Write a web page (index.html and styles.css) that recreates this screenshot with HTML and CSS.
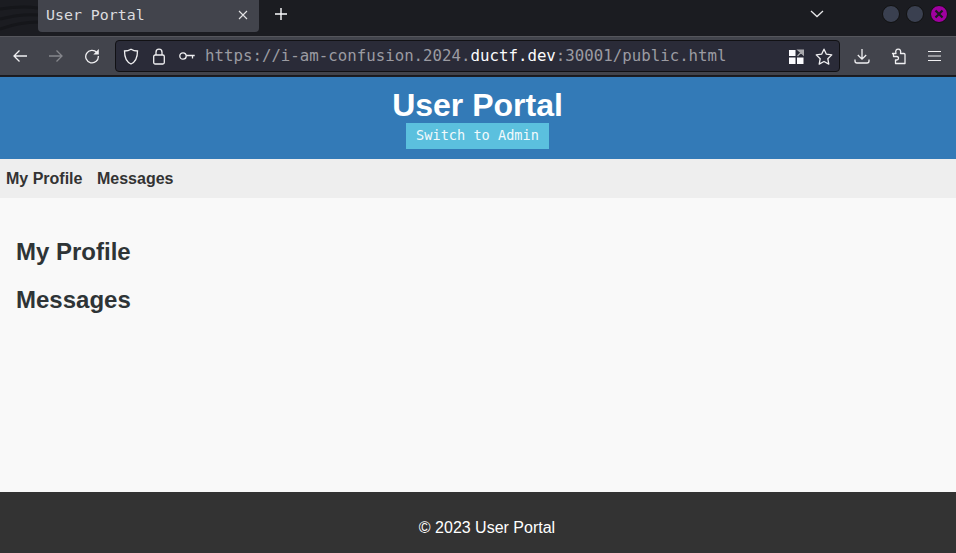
FILE: index.html
```html
<!DOCTYPE html>
<html lang="en">
<head>
<meta charset="utf-8">
<title>User Portal</title>
<link rel="stylesheet" href="styles.css">
</head>
<body>
<div class="chrome">
  <div class="tabbar">
    <svg class="streaks" width="38" height="36" viewBox="0 0 38 36"><path d="M0 9c12-2 26-3 38-1M0 19c12-3 26-5 38-4M0 29c14-5 26-7 38-7" fill="none" stroke="#15161a" stroke-width="3"/></svg>
    <div class="tab">
      <span class="tab-title">User Portal</span>
      <svg class="tab-close" width="10" height="10" viewBox="0 0 10 10"><path d="M1 1l8 8M9 1l-8 8" fill="none" stroke="#e4e4e6" stroke-width="1.1"/></svg>
    </div>
    <svg class="newtab" width="14" height="14" viewBox="0 0 14 14"><path d="M7 1v12M1 7h12" fill="none" stroke="#fbfbfe" stroke-width="1.4"/></svg>
    <svg class="tablist" width="14" height="8" viewBox="0 0 14 8"><path d="M1 1l6 5.500L13 1" fill="none" stroke="#e6e6e8" stroke-width="1.300"/></svg>
    <div class="winbtns">
      <span class="winbtn"></span>
      <span class="winbtn"></span>
      <span class="winbtn winclose"><svg width="10" height="10" viewBox="0 0 10 10"><path d="M1.500 1.500l7 7M8.500 1.500l-7 7" fill="none" stroke="#1a1a1e" stroke-width="2.200"/></svg></span>
    </div>
  </div>
  <div class="toolbar">
    <svg class="tool" width="16" height="16" viewBox="0 0 16 16"><path d="M15 8H2M7.500 2.500L2 8l5.500 5.500" fill="none" stroke="#f0f0f2" stroke-width="1.300"/></svg>
    <svg class="tool fwd" width="16" height="16" viewBox="0 0 16 16"><path d="M1 8h13M8.500 2.500L14 8l-5.500 5.500" fill="none" stroke="#85868c" stroke-width="1.300"/></svg>
    <svg class="tool reload" width="16" height="16" viewBox="0 0 16 16"><path d="M12.800 4.500A6.300 6.300 0 1 0 14.300 8" fill="none" stroke="#f0f0f2" stroke-width="1.300"/><path d="M14.800 1v5.500H9.300z" fill="#f0f0f2"/></svg>
    <div class="urlbar">
      <svg class="shield" width="16" height="17" viewBox="0 0 16 17"><path d="M8 1.200c2 1.300 4 1.800 6.500 1.800 0 6-1 10.500-6.500 13C2.500 13.500 1.500 9 1.500 3 4 3 6 2.500 8 1.200z" fill="none" stroke="#f0f0f2" stroke-width="1.300"/></svg>
      <svg class="lock" width="14" height="17" viewBox="0 0 14 17"><rect x="1.700" y="7" width="10.600" height="9" rx="1.500" fill="none" stroke="#f0f0f2" stroke-width="1.300"/><path d="M4 7V4.200a3 3 0 0 1 6 0V7" fill="none" stroke="#f0f0f2" stroke-width="1.300"/></svg>
      <svg class="key" width="16" height="10" viewBox="0 0 16 10"><circle cx="4" cy="5" r="3.200" fill="none" stroke="#f0f0f2" stroke-width="1.300"/><path d="M7.200 4.500h8.500M13.500 4.500v3" fill="none" stroke="#f0f0f2" stroke-width="1.300"/></svg>
      <div class="url"><span class="dim">https://i-am-confusion.2024.</span><span class="host">ductf.dev</span><span class="dim">:30001/public.html</span></div>
      <svg class="qr" width="15" height="15" viewBox="0 0 15 15"><path d="M0 1h6.500v6H0zM0 8.500h6.500V15H0zM8 8.500h6.500V15H8z" fill="#fbfbfe"/><path d="M9 1h5.500v5zM14 1.500L8.500 7" fill="#a8a8ac" stroke="#a8a8ac" stroke-width="1.200"/></svg>
      <svg class="star" width="18" height="17" viewBox="0 0 18 17"><path d="M9 1.200l2.400 5 5.400.7-4 3.800 1 5.400L9 13.500l-4.800 2.600 1-5.400-4-3.800 5.400-.7z" fill="none" stroke="#f0f0f2" stroke-width="1.300" stroke-linejoin="round"/></svg>
    </div>
    <svg class="tool dl" width="16" height="16" viewBox="0 0 16 16"><path d="M8 1v10M3.800 7L8 11.200 12.200 7M1 11.500v1.500a2 2 0 0 0 2 2h10a2 2 0 0 0 2-2v-1.500" fill="none" stroke="#f0f0f2" stroke-width="1.300"/></svg>
    <svg class="tool ext" width="16" height="17" viewBox="0 0 16 17"><path d="M1.500 5.500h3.500c-1-3 .5-4.300 2.200-4.300S10.300 2.500 9.500 5.500h3.500a1 1 0 0 1 1 1v9H4.500v-3.500h1.200c1.300 0 1.800-1 1.800-1.800S7 8.500 5.700 8.500H2.500V6.500z" fill="none" stroke="#f0f0f2" stroke-width="1.300" stroke-linejoin="round"/></svg>
    <svg class="tool menu" width="13" height="12" viewBox="0 0 13 12"><path d="M0 1.500h13M0 6h13M0 10.500h13" fill="none" stroke="#f0f0f2" stroke-width="1.200"/></svg>
  </div>
</div>
<header class="site-header">
  <h1>User Portal</h1>
  <button class="switch">Switch to Admin</button>
</header>
<nav class="site-nav">
  <a href="#profile">My Profile</a>
  <a href="#messages">Messages</a>
</nav>
<main class="content">
  <h2 id="profile">My Profile</h2>
  <h2 id="messages">Messages</h2>
</main>
<footer class="site-footer">© 2023 User Portal</footer>
</body>
</html>
```

FILE: styles.css
```css
* { box-sizing: border-box; }
html, body { height: 100%; }
body {
  margin: 0;
  height: 100vh;
  display: flex;
  flex-direction: column;
  overflow: hidden;
  font-family: "Liberation Sans", Arial, sans-serif;
  background: #f9f9f9;
  color: #333;
}
.chrome { flex: none; height: 77px; background: #1c1d22; }
.tabbar { height: 36px; display: flex; align-items: flex-start; background: #1b1c21; }
.streaks { flex: none; }
.tab {
  width: 221px; height: 32px;
  background: #42444c;
  border-radius: 0 0 4px 4px;
  display: flex; align-items: center; justify-content: space-between;
  padding: 0 11px 3px 8px;
}
.tab-title { font: 14.9px "DejaVu Sans Mono", monospace; color: #dcdcdf; }
.newtab { margin: 7px 0 0 15px; }
.tablist { margin: 10px 0 0 522px; }
.winbtns { display: flex; gap: 6px; margin: 5px 0 0 58px; }
.winbtn { width: 18px; height: 18px; border-radius: 50%; background: #3a4050; border: 1px solid #111; display: flex; align-items: center; justify-content: center; }
.winclose { background: #a000a0; }
.toolbar {
  height: 40px; background: #42444c;
  border-top: 1px solid #55565c;
  border-bottom: 1px solid #1a1a1e;
  display: flex; align-items: center;
  padding-left: 12px;
}
.fwd { margin-left: 20px; }
.reload { margin-left: 20px; }
.urlbar {
  width: 725px; height: 32px; margin-left: 15px;
  background: #2a2b38; border: 1px solid #111114; border-radius: 4px;
  display: flex; align-items: center; padding-left: 7px;
}
.lock { margin-left: 13px; }
.key { margin-left: 13px; }
.url { flex: 1; margin-left: 10px; padding-bottom: 2px; font: 15.76px "DejaVu Sans Mono", monospace; white-space: nowrap; }
.dim { color: #9b9ba2; }
.host { color: #fbfbfe; }
.star { margin: 0 6px 0 11px; }
.dl { margin-left: 14px; }
.ext { margin-left: 21px; }
.menu { margin-left: 21px; }
.site-header {
  flex: none; height: 82px; background: #337ab7; color: #fff;
  display: flex; flex-direction: column; align-items: center;
  padding: 10px 1px 0 0;
}
.site-header h1 { margin: 0; font-size: 32px; line-height: 36px; font-weight: bold; }
.switch {
  height: 26px; padding: 0 10px 2px; border: 0;
  background: #5bc0de; color: #f2fafc;
  font: 13.6px "DejaVu Sans Mono", monospace;
}
.site-nav { flex: none; height: 39px; background: #eee; display: flex; align-items: center; gap: 14.5px; padding-left: 6px; }
.site-nav a { font-size: 16px; font-weight: bold; color: #333; text-decoration: none; }
.content { flex: 1; padding: 39px 16px 0; }
.content h2 { margin: 0 0 19px; font-size: 24px; line-height: 29px; font-weight: bold; color: #2e3436; }
.site-footer { flex: none; height: 61px; background: #333; color: #fff; display: flex; align-items: center; justify-content: center; padding: 10px 0 0 18px; font-size: 16px; }
```
